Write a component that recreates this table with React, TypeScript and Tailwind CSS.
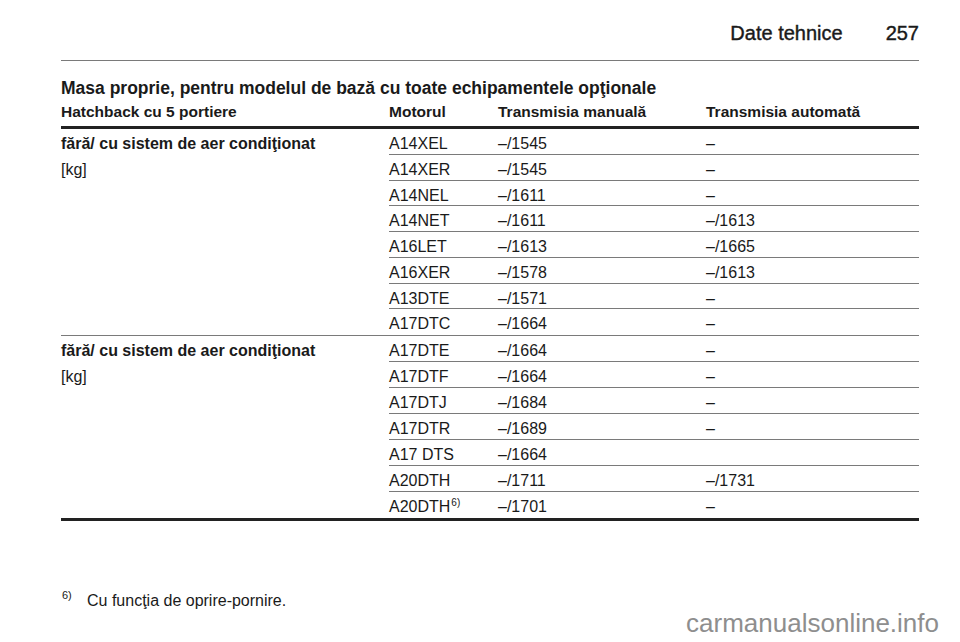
const groups = [
  {
    label: "fără/ cu sistem de aer condiţionat",
    unit: "[kg]",
    rowH: "h-[25.75px]",
    rows: [
      ["A14XEL", "–/1545", "–"],
      ["A14XER", "–/1545", "–"],
      ["A14NEL", "–/1611", "–"],
      ["A14NET", "–/1611", "–/1613"],
      ["A16LET", "–/1613", "–/1665"],
      ["A16XER", "–/1578", "–/1613"],
      ["A13DTE", "–/1571", "–"],
      ["A17DTC", "–/1664", "–"],
    ],
  },
  {
    label: "fără/ cu sistem de aer condiţionat",
    unit: "[kg]",
    rowH: "h-[26px]",
    rows: [
      ["A17DTE", "–/1664", "–"],
      ["A17DTF", "–/1664", "–"],
      ["A17DTJ", "–/1684", "–"],
      ["A17DTR", "–/1689", "–"],
      ["A17 DTS", "–/1664", ""],
      ["A20DTH", "–/1711", "–/1731"],
      ["A20DTH6", "–/1701", "–"],
    ],
  },
];

function Engine({ name }: { name: string }) {
  if (name === "A20DTH6") {
    return (
      <span>
        A20DTH<sup className="text-[10px] relative -top-[6px] ml-[1px]">6)</sup>
      </span>
    );
  }
  return <span>{name}</span>;
}

export default function App() {
  return (
    <div
      className="relative w-[960px] h-[642px] bg-white text-[#1a1a1a] pl-[61px] pr-[41px]"
      style={{ fontFamily: '"Liberation Sans", Arial, sans-serif' }}
    >
      {/* Page header */}
      <div className="h-[61px] border-b-[1.5px] border-[#7a7a7a] flex justify-end items-start pt-[18px] gap-[43px] text-[20px] [-webkit-text-stroke:0.4px_#1a1a1a]">
        <span>Date tehnice</span>
        <span>257</span>
      </div>

      <h2 className="mt-[17px] text-[17.5px] font-bold leading-[20px]">
        Masa proprie, pentru modelul de bază cu toate echipamentele opţionale
      </h2>

      {/* Column headers */}
      <div className="mt-[6px] flex h-[25px] items-end pb-[6px] border-b-[3px] border-[#222] text-[15.5px] font-bold leading-[16px]">
        <div className="w-[328px]">Hatchback cu 5 portiere</div>
        <div className="w-[109px]">Motorul</div>
        <div className="w-[208px]">Transmisia manuală</div>
        <div>Transmisia automată</div>
      </div>

      {groups.map((g, gi) => (
        <div
          key={gi}
          className={
            gi === groups.length - 1
              ? "flex border-b-[3px] border-[#222]"
              : "flex border-b-[1.5px] border-[#7a7a7a]"
          }
        >
          <div className="w-[328px] text-[16px] leading-[16px]">
            <div className="pt-[7px] h-[26px] font-bold">{g.label}</div>
            <div className="pt-[7px] h-[26px]">{g.unit}</div>
          </div>
          <div className="flex-1 flex flex-col text-[16px] leading-[16px]">
            {g.rows.map((r, ri) => (
              <div
                key={ri}
                className={`${g.rowH} flex pt-[7px] ${
                  ri < g.rows.length - 1 ? "border-b-[1.5px] border-[#7a7a7a]" : ""
                }`}
              >
                <div className="w-[109px]">
                  <Engine name={r[0]} />
                </div>
                <div className="w-[208px]">{r[1]}</div>
                <div>{r[2]}</div>
              </div>
            ))}
          </div>
        </div>
      ))}

      {/* Footnote */}
      <div className="mt-[71px] flex items-start text-[16px] leading-[18px]">
        <span className="w-[26px] pl-[1px] text-[11px] leading-[11px] -mt-[2px]">6)</span>
        <span>Cu funcţia de oprire-pornire.</span>
      </div>

      <div className="absolute right-[21px] bottom-[4px] text-[26px] leading-[30px] text-[#8e8e8e]">
        carmanualsonline.info
      </div>
    </div>
  );
}
